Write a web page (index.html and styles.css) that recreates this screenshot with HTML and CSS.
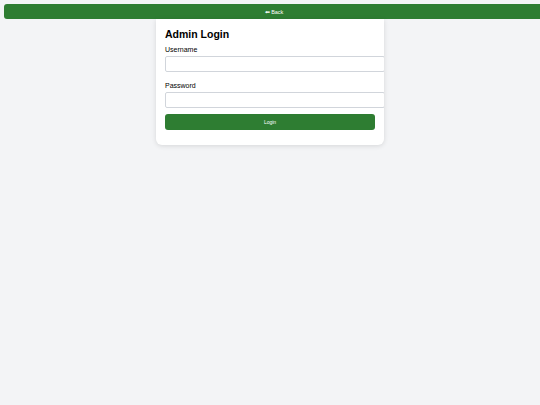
FILE: index.html
```html
<!DOCTYPE html>
<html>
<head>
<meta charset="utf-8">
<link rel="stylesheet" href="styles.css">
</head>
<body>
<button class="back">⬅ Back</button>
<div class="card">
  <h2 class="title">Admin Login</h2>
  <label class="label">Username</label>
  <input class="input" type="text">
  <label class="label">Password</label>
  <input class="input" type="password">
  <button class="login">Login</button>
</div>
</body>
</html>
```
FILE: styles.css
```css
html, body { margin: 0; padding: 0; }
body {
  background: #f3f4f6;
  font-family: "Liberation Sans", Arial, sans-serif;
  width: 540px;
  height: 405px;
  overflow: hidden;
}
.back {
  display: block;
  width: 100%;
  margin: 4px 0 0 4px;
  height: 15px;
  padding: 0;
  border: none;
  border-radius: 3px;
  background: #2e7d32;
  color: #fff;
  font-family: "Liberation Sans", Arial, sans-serif;
  font-size: 5.5px;
}
.card {
  width: 210px;
  margin: 0 auto;
  padding: 9px 9px 15px;
  background: #fff;
  border-radius: 0 0 6px 6px;
  box-shadow: 0 1px 5px rgba(0,0,0,0.12);
  overflow: hidden;
}
.title {
  margin: 0 0 6px;
  font-size: 10.5px;
  line-height: 12px;
  font-weight: bold;
  color: #000;
}
.label {
  display: block;
  font-size: 7px;
  line-height: 8px;
  color: #000;
  margin-bottom: 2px;
}
.input {
  display: block;
  width: 100%;
  height: 6px;
  padding: 4px;
  border: 1px solid #d1d5db;
  border-radius: 2px;
  font-size: 6px;
  margin: 0 0 10px;
  background: #fff;
}
.login {
  display: block;
  width: 100%;
  height: 16px;
  margin-top: -4px;
  padding: 0;
  border: none;
  border-radius: 3px;
  background: #2e7d32;
  color: #fff;
  font-family: "Liberation Sans", Arial, sans-serif;
  font-size: 5px;
}
```
